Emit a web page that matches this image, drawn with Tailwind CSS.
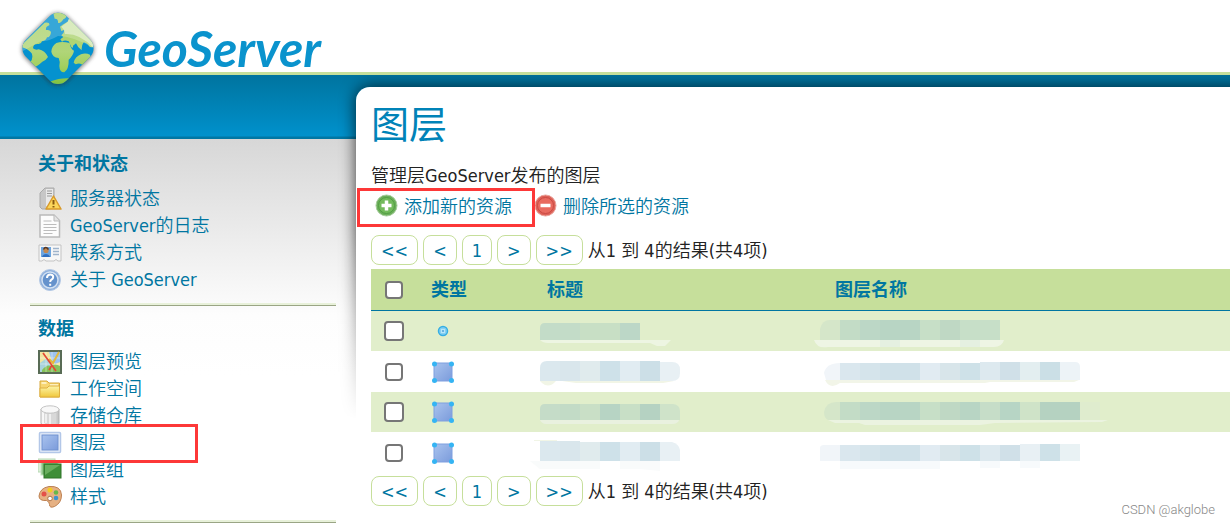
<!DOCTYPE html>
<html lang="zh">
<head>
<meta charset="utf-8">
<title>GeoServer: 图层</title>
<script src="https://cdn.jsdelivr.net/npm/@tailwindcss/browser@4"></script>
</head>
<body class="relative min-h-screen overflow-x-hidden bg-white font-['DejaVu_Sans_Condensed','Noto_Sans_CJK_SC',sans-serif] text-lg font-[350] leading-[27px] text-[#222]">
<svg class="absolute size-0" aria-hidden="true">
  <defs>
    <linearGradient id="sq" x1="0" y1="0" x2="1" y2="1"><stop offset="0" stop-color="#a9c3ee"/><stop offset="1" stop-color="#7b9bdb"/></linearGradient>
    <linearGradient id="gold" x1="0" y1="0" x2="0" y2="1"><stop offset="0" stop-color="#fdf5a8"/><stop offset="1" stop-color="#f0c83c"/></linearGradient>
    <linearGradient id="silver" x1="0" y1="0" x2="1" y2="0"><stop offset="0" stop-color="#f4f4f4"/><stop offset=".5" stop-color="#fff"/><stop offset="1" stop-color="#bdbdbd"/></linearGradient>
    <symbol id="poly" viewBox="0 0 24 24"><rect x="3" y="3" width="18" height="18" fill="url(#sq)" stroke="#7f9fe0"/><g fill="#35b4f3"><circle cx="3.500" cy="4" r="2.500"/><circle cx="20.500" cy="4" r="2.500"/><circle cx="3.500" cy="20.500" r="2.500"/><circle cx="20.500" cy="20.500" r="2.500"/></g></symbol>
  </defs>
</svg>

<header class="relative z-10 flex h-[75px] border-b-[3px] border-[#c6df9b] bg-white pl-[104px]">
  <svg class="absolute left-[18px] top-2 size-20 overflow-visible" viewBox="54 24 240 240" aria-hidden="true">
    <defs>
      <clipPath id="dia"><rect x="88" y="59" width="172" height="172" rx="36" transform="rotate(45 174 145)"/></clipPath>
      <linearGradient id="land" x1="0" y1="40" x2="0" y2="250" gradientUnits="userSpaceOnUse"><stop offset="0" stop-color="#a9d167"/><stop offset=".55" stop-color="#b0d578"/><stop offset=".75" stop-color="#a3d060"/><stop offset="1" stop-color="#83c341"/></linearGradient>
      <filter id="halo" x="-30%" y="-30%" width="160%" height="160%"><feGaussianBlur stdDeviation="6"/></filter>
    </defs>
    <rect x="86" y="59" width="176" height="176" rx="40" transform="rotate(45 174 147)" fill="#333" opacity=".65" filter="url(#halo)"/>
    <g clip-path="url(#dia)">
      <rect x="60" y="30" width="230" height="230" fill="#0592cf"/>
      <g fill="url(#land)">
        <path d="M60 140 L134 68 Q150 65 148 76 Q136 80 138 90 Q152 88 153 98 Q150 112 141 112 Q138 122 126 124 Q123 134 113 132 Q99 132 99 145 Q106 151 116 148 Q135 152 144 171 Q137 182 127 185 Q112 199 101 202 L90 188 Q101 174 95 160 Q85 145 60 140Z"/>
        <path d="M160 40 Q182 34 200 43 Q201 53 190 58 Q180 73 174 68 Q175 55 164 56Z"/>
        <path d="M180 80 L190 73 L203 65 Q205 57 212 50 L286 130 Q278 148 267 139 Q265 131 251 127 Q244 136 245 151 Q233 143 228 130 L219 137 Q220 147 214 141 L206 124 Q194 119 186 125 L181 118 L190 111 L184 106 Q194 99 192 90 L184 93Z"/>
        <path d="M169 129 Q186 123 209 129 Q212 148 222 152 Q220 166 206 179 Q207 207 193 217 Q179 218 178 198 Q181 184 176 174 Q157 173 154 155 Q155 138 169 129Z"/>
        <path d="M221 188 Q225 170 243 163 Q256 157 270 164 Q275 173 263 183 L249 197 Q241 186 227 193Z"/>
        <path d="M150 245 Q179 233 211 235 L190 260 H150Z"/>
      </g>
      <path d="M60 30 H290 V150 Q222 108 174 108 Q145 125 122 124 L60 158Z" fill="#fff" opacity=".2"/>
      <path d="M203 65 Q205 57 212 50 L286 130 L278 142 Q240 100 195 102 L192 90 L184 80Z" fill="#fff" opacity=".45"/>
    </g>
  </svg>
  <a href="#" class="font-[Lato,sans-serif] text-[50px] font-bold italic leading-[96px] text-[#0a93cd]">GeoServer</a>
</header>

<div class="relative grid grid-cols-[356px_minmax(0,1fr)] bg-[linear-gradient(#00749f,#0091cc_61px,#0077a4_62px,#0077a4_64px,#d7d7d7_64px,#fdfdfd_240px,#fff_300px)]">
  <nav class="pb-1 pl-[30px] pr-5 pt-[75px] text-[#0076a1]" aria-label="GeoServer">
    <section class="mb-[9px] border-b border-[#9aa585] pb-3 shadow-[inset_0_-2px_0_#e8f1da]">
      <h2 class="mb-2 pl-2 font-bold">关于和状态</h2>
      <ul class="pl-2">
        <li><a href="#" class="flex items-center gap-2"><svg class="size-6" viewBox="0 0 24 24"><path d="M2 6 7 1h9v18l-4 3H4l-2-2Z" fill="#c7c7c7" stroke="#aaa"/><path d="M8 2h7v17H8Z" fill="#e9e9e9"/><path d="M9 4h5M9 6.500h5M9 9h5" stroke="#999"/><path d="M15.500 9 23 22H8Z" fill="#fbd65a" stroke="#d99a2b" stroke-width="1.500" stroke-linejoin="round"/><path d="M15.500 13v4.500M15.500 19v1.500" stroke="#8a5a10" stroke-width="2"/></svg>服务器状态</a></li>
        <li><a href="#" class="flex items-center gap-2"><svg class="size-6" viewBox="0 0 24 24"><path d="M2 1h14l5.500 5.500V23H2Z" fill="#fcfcfc" stroke="#b9b9b9" stroke-width="1.500"/><path d="M16 1v6h5.500" fill="#e4e4e4" stroke="#b9b9b9"/><path d="M5.500 7h8M5.500 10.500h13M5.500 13.500h13M5.500 16.500h13M5.500 19.500h9" stroke="#bcbcbc"/></svg>GeoServer的日志</a></li>
        <li><a href="#" class="flex items-center gap-2"><svg class="size-6" viewBox="0 0 24 24"><path d="M1 4h22v16h-3l-2-1.500-2 1.500H8l-2-1.500L4 20H1Z" fill="#f7f7f7" stroke="#c3c3c3"/><rect x="3" y="6" width="10" height="10" fill="#6da5df"/><circle cx="8" cy="9.500" r="2.600" fill="#c4884f"/><path d="M5.500 8.500q2-4 5 0" stroke="#5b351c" stroke-width="1.500" fill="none"/><path d="M4 16q1-3 4-3t4 3" fill="#2f6fc0"/><path d="M15 7.500h6M15 10.500h6M15 13.500h6" stroke="#9fb4cc" stroke-width="1.500"/></svg>联系方式</a></li>
        <li><a href="#" class="flex items-center gap-2"><svg class="size-6" viewBox="0 0 24 24"><circle cx="12" cy="12" r="10.500" fill="#8fb0dc" stroke="#b4c9e5"/><circle cx="12" cy="12" r="8" fill="#6592cc" stroke="#d3e1f2" stroke-width="1.500"/><path d="M9 10q0-3.500 3.200-3.500 3 0 3 2.600 0 1.500-1.700 2.600-1.300.8-1.300 2.300M12.200 15.800v2" fill="none" stroke="#fff" stroke-width="2"/></svg>关于 GeoServer</a></li>
      </ul>
    </section>
    <section class="border-b border-[#9aa585] pb-3 shadow-[inset_0_-2px_0_#e8f1da]">
      <h2 class="mb-[6px] pl-2 font-bold">数据</h2>
      <ul class="pl-2">
        <li><a href="#" class="flex items-center gap-2"><svg class="size-6" viewBox="0 0 24 24"><rect x="1" y="1" width="22" height="22" fill="#f1e6a0" stroke="#586b55" stroke-width="2"/><path d="M11 2h11v10l-5 2-3-3Z" fill="#9dc3ef"/><path d="M2 13 9 8l4 8v6H2Z" fill="#a8d3dd"/><path d="M4 20q5-6 9-4 4-3 9 0v6H4Z" fill="#86c25b"/><path d="M8 2v20M14 2v20M2 8h20M2 14h20" stroke="#fff" stroke-opacity=".4"/><path d="m11 9 4 4 6-11" stroke="#e3b93c" stroke-width="2" fill="none"/><path d="m5 3 13 18M14 15l-3 5" stroke="#e24a35" stroke-width="1.700"/></svg>图层预览</a></li>
        <li><a href="#" class="flex items-center gap-2"><svg class="size-6" viewBox="0 0 24 24"><path d="M2 20V4h7l2 2h10.500v14Z" fill="#f7d672" stroke="#d8a93d"/><path d="M3.500 6h5M12 8h8" stroke="#fff8d8" stroke-width="1.500"/><path d="M2 20V11h7l2-2h10.500v11Z" fill="url(#gold)" stroke="#dfb040"/></svg>工作空间</a></li>
        <li><a href="#" class="flex items-center gap-2"><svg class="size-6" viewBox="0 0 24 24"><path d="M3 5v14q0 3 9 3t9-3V5Z" fill="url(#silver)" stroke="#b4b4b4"/><path d="M6 9v10q2 2 6 2t6-2V9" fill="#d8d8d8"/><path d="M8 10v9M12 10v10" stroke="#efefef" stroke-width="2"/><ellipse cx="12" cy="5.500" rx="9" ry="3.700" fill="#f8f8f8" stroke="#c4c4c4"/></svg>存储仓库</a></li>
        <li class="relative"><a href="#" class="flex items-center gap-2"><svg class="size-6" viewBox="0 0 24 24"><rect x="1.500" y="1.500" width="21" height="20" rx="1" fill="#e7eefa" stroke="#b3c7e8" stroke-width="1.500"/><rect x="4" y="4" width="16" height="15" fill="url(#sq)" stroke="#7192cf"/></svg>图层</a>
          <span class="pointer-events-none absolute -left-[18px] -top-[5px] h-[39px] w-[178px] border-[3px] border-[#fd3838]"></span></li>
        <li><a href="#" class="flex items-center gap-2"><svg class="size-6" viewBox="0 0 24 24"><rect x="0" y="1" width="17" height="13" fill="#dcefd9" stroke="#b7d9b4"/><rect x="3" y="3" width="17" height="14" fill="#8cc487" stroke="#c5e3c1"/><rect x="6" y="6" width="17" height="14" fill="#3f8e38" stroke="#2e7529"/><path d="M7 7h15L7 17Z" fill="#69ae5e"/></svg>图层组</a></li>
        <li><a href="#" class="flex items-center gap-2"><svg class="size-6" viewBox="0 0 24 24"><path d="M1 11Q2 3 11 1.500q12-1 12.500 8.500 0 8-7 11.500-5 2-5-2 0-3-3-4Q1 16 1 11Z" fill="#e6b183" stroke="#bd7f4f"/><circle cx="6" cy="9" r="2.500" fill="#e45148"/><circle cx="12" cy="5" r="2.500" fill="#f5cc22"/><circle cx="18" cy="7.500" r="2.300" fill="#67b84a"/><circle cx="18" cy="13" r="2.300" fill="#3e92cf"/><circle cx="12" cy="13.500" r="2.300" fill="#fff" stroke="#ad754b"/></svg>样式</a></li>
      </ul>
    </section>
  </nav>

  <main class="relative mt-3 pl-[15px] pt-[13px]">
    <div class="absolute -left-10 -top-3 right-0 h-[344px] overflow-hidden [mask-image:linear-gradient(#000_45%,transparent)]">
      <div class="absolute -right-10 left-10 top-3 h-[400px] rounded-tl-[14px] shadow-[0_0_16px_rgba(0,0,0,0.75)]"></div>
    </div>
    <div class="absolute inset-0 rounded-tl-[14px] bg-white"></div>
    <div class="relative">
      <h1 class="mb-3 text-[38px] font-normal leading-[50px] text-[#0083b8]">图层</h1>
      <p>管理层GeoServer发布的图层</p>
      <div class="flex h-[34px] items-center gap-[22px] pl-1 text-[#0076a1]">
        <a href="#" class="relative flex items-center gap-[5px]"><svg class="size-6" viewBox="0 0 24 24"><circle cx="11.500" cy="11.500" r="10.500" fill="#6cae5a" stroke="#a6cd9c"/><circle cx="11.500" cy="11.500" r="8" fill="#73ba5c" stroke="#519e43"/><path d="M11.500 6.500v10M6.500 11.500h10" stroke="#fff" stroke-width="3.500"/></svg>添加新的资源
          <span class="pointer-events-none absolute -left-[18px] -top-[5px] h-[39px] w-[178px] border-[3px] border-[#fd3838]"></span></a>
        <a href="#" class="flex items-center gap-[5px]"><svg class="size-6" viewBox="0 0 24 24"><circle cx="11.500" cy="11.500" r="10.500" fill="#dd6258" stroke="#eba49d"/><circle cx="11.500" cy="11.500" r="8" fill="#e96b60" stroke="#ca4a44"/><path d="M6.500 11.500h10" stroke="#fff" stroke-width="3.500"/></svg>删除所选的资源</a>
      </div>
      <div class="mb-1 mt-3 flex h-[30px] items-center gap-[5px]">
        <button class="h-[30px] rounded-lg border border-[#c6df9b] px-[9px] text-[#0076a1]">&lt;&lt;</button>
        <button class="h-[30px] rounded-lg border border-[#c6df9b] px-[9px] text-[#0076a1]">&lt;</button>
        <button class="h-[30px] rounded-lg border border-[#c6df9b] px-[9px] text-[#0076a1]">1</button>
        <button class="h-[30px] rounded-lg border border-[#c6df9b] px-[9px] text-[#0076a1]">&gt;</button>
        <button class="h-[30px] rounded-lg border border-[#c6df9b] px-[9px] text-[#0076a1]">&gt;&gt;</button>
        <span>从1 到 4的结果(共4项)</span>
      </div>
      <table class="w-full table-fixed border-separate border-spacing-0 text-left">
        <colgroup><col class="w-[50px]"><col class="w-[116px]"><col class="w-[288px]"><col></colgroup>
        <thead>
          <tr class="h-[42px] bg-[#c6df9b] text-[#0076a1]">
            <th class="border-b border-[#0076a1] p-0 pl-[14px]"><input type="checkbox" aria-label="全选" class="block size-[18px] appearance-none rounded-[4px] border-2 border-[#767676] bg-white"></th>
            <th class="border-b border-[#0076a1] p-0 pl-[10px]"><a href="#">类型</a></th>
            <th class="border-b border-[#0076a1] p-0 pl-[10px]"><a href="#">标题</a></th>
            <th class="border-b border-[#0076a1] p-0 pl-[10px]"><a href="#">图层名称</a></th>
          </tr>
        </thead>
        <tbody>
          <tr class="h-10 bg-[#e1eecb]">
            <td class="p-0 pl-[13px]"><input type="checkbox" aria-label="选择图层 1" class="block size-5 appearance-none rounded-[4px] border-2 border-[#767676] bg-white"></td>
            <td class="p-0 pl-[10px]"><svg class="block size-6" viewBox="0 0 24 24"><circle cx="12" cy="12" r="4.500" fill="#86d0f2" stroke="#35aee4" stroke-width="1.500"/><rect x="10.500" y="10.500" width="3" height="3" fill="#6ab3e0" stroke="#b7e6fa"/></svg></td>
            <td class="p-0 pl-[3px]"><svg class="block h-10 w-[140px] overflow-visible" viewBox="0 0 140 40"><path d="M0 17q0-5 5-5h35v17H0Z" fill="#c3dcc8"/><path d="M40 12h40v17H40Z" fill="#c8dfc5"/><path d="M80 12h20v17H80Z" fill="#bcd7c7"/><path d="M0 29h131l-6 6h-8l-7-3H8q-5 0-8-3Z" fill="#edf5e2"/></svg></td>
            <td class="p-0"><svg class="block h-10 w-[280px] overflow-visible" viewBox="5 0 280 40"><path d="M0 18q2-9 10-9h10v20H0Z" fill="#d5e6c9"/><path d="M20 9h20v20H20Z" fill="#c3dcc6"/><path d="M40 9h20v20H40Z" fill="#bcd7c6"/><path d="M60 9h40v20H60Z" fill="#b8d5c4"/><path d="M100 9h20v20h-20Z" fill="#c7dfc7"/><path d="M120 9h20v20h-20Z" fill="#bfd8c4"/><path d="M140 9h40v20h-40Z" fill="#c7dfc8"/><path d="M-6 29h190q-2 7-10 7H8Q-3 38-6 29Z" fill="#eef5e4"/><path d="M60 29h20v7H60ZM140 29h20v7h-20Z" fill="#e5f0e1"/></svg></td>
          </tr>
          <tr class="h-[41px]">
            <td class="p-0 pl-[14px]"><input type="checkbox" aria-label="选择图层 2" class="block size-[18px] appearance-none rounded-[4px] border-2 border-[#767676] bg-white"></td>
            <td class="p-0 pl-[10px]"><svg class="block size-6"><use href="#poly"/></svg></td>
            <td class="p-0 pl-[3px]"><svg class="block h-10 w-[140px] overflow-visible" viewBox="0 0 140 40"><path d="M0 16q0-7 7-7h13v20H0Z" fill="#dbe8ee"/><path d="M20 9h20v20H20Z" fill="#d9e6ec"/><path d="M40 9h20v20H40Z" fill="#e0ebed"/><path d="M60 9h20v20H60Z" fill="#cee1e9"/><path d="M80 9h20v20H80Z" fill="#e1ecf2"/><path d="M100 9h20v20h-20Z" fill="#ccdfe7"/><path d="M120 10h12q8 0 8 8v3q0 8-8 8h-12Z" fill="#e8f0f4"/><path d="M0 29h16q-7 8-14 2ZM22 29h112l-11 2H36Z" fill="#f1f5e6"/></svg></td>
            <td class="p-0"><svg class="block h-10 w-[280px] overflow-visible" viewBox="5 0 280 40"><path d="M4 21q2-10 16-10v17H6Z" fill="#f1f5f9"/><path d="M20 11h20v17H20Z" fill="#dae7ee"/><path d="M40 11h20v17H40Z" fill="#d5e4eb"/><path d="M60 11h40v17H60Z" fill="#d0e1e9"/><path d="M100 11h20v17h-20Z" fill="#e1ebf2"/><path d="M120 11h20v17h-20Z" fill="#d8e5ea"/><path d="M140 11h20v17h-20Z" fill="#cee1e8"/><path d="M160 10h20v18h-20Z" fill="#dde9ef"/><path d="M180 10h20v18h-20Z" fill="#d0e0e8"/><path d="M200 10h20v18h-20Z" fill="#e3eef0"/><path d="M220 10h20v18h-20Z" fill="#cbdfe6"/><path d="M240 10h15q5 0 5 5v13h-20Z" fill="#edf3f7"/><path d="M5 28h254l-5 2h-84l-5 1H20q-10 7-15-3Z" fill="#f2f5e8"/></svg></td>
          </tr>
          <tr class="h-10 bg-[#e1eecb]">
            <td class="p-0 pl-[13px]"><input type="checkbox" aria-label="选择图层 3" class="block size-5 appearance-none rounded-[4px] border-2 border-[#767676] bg-white"></td>
            <td class="p-0 pl-[10px]"><svg class="block size-6"><use href="#poly"/></svg></td>
            <td class="p-0 pl-[3px]"><svg class="block h-10 w-[140px] overflow-visible" viewBox="0 0 140 40"><path d="M0 17q0-5 5-5h15v16H0Z" fill="#c5dcc8"/><path d="M20 12h20v16H20Z" fill="#c2dbc6"/><path d="M40 12h20v16H40Z" fill="#c9dfc6"/><path d="M60 12h20v16H60Z" fill="#b7d4c4"/><path d="M80 12h20v16H80Z" fill="#c8dfc6"/><path d="M100 12h20v16h-20Z" fill="#b5d2c2"/><path d="M120 12h13q7 1 7 7v9h-20Z" fill="#cfe3c9"/><path d="M0 28h139q-1 4-7 4H6q-4 0-6-4Z" fill="#e9f1df"/></svg></td>
            <td class="p-0"><svg class="block h-10 w-[280px] overflow-visible" viewBox="5 0 280 40"><path d="M4 20q2-10 12-10h4v18H8Q4 26 4 20Z" fill="#d5e6c9"/><path d="M20 10h20v18H20Z" fill="#c3dcc6"/><path d="M40 10h20v18H40Z" fill="#bcd7c6"/><path d="M60 10h40v18H60Z" fill="#b8d5c4"/><path d="M100 10h20v18h-20Z" fill="#c7dfc7"/><path d="M120 10h20v18h-20Z" fill="#bfd8c4"/><path d="M140 10h20v18h-20Z" fill="#b8d5c4"/><path d="M160 10h20v18h-20Z" fill="#c6ddc8"/><path d="M180 10h20v18h-20Z" fill="#b7d5c5"/><path d="M200 10h20v18h-20Z" fill="#cfe3c8"/><path d="M220 10h40v18h-40Z" fill="#b5d2c1"/><path d="M260 10h20v18h-20Z" fill="#dfecce"/><path d="M8 28h280l-6 2-107 1-15 2H45l-6-2H15Z" fill="#ebf3e0"/></svg></td>
          </tr>
          <tr class="h-[41px]">
            <td class="p-0 pl-[14px]"><input type="checkbox" aria-label="选择图层 4" class="block size-[18px] appearance-none rounded-[4px] border-2 border-[#767676] bg-white"></td>
            <td class="p-0 pl-[10px]"><svg class="block size-6"><use href="#poly"/></svg></td>
            <td class="p-0 pl-[3px]"><svg class="block h-10 w-[140px] overflow-visible" viewBox="0 0 140 40"><path d="M-6 7h23v1H-6Z" fill="#f1f5e6"/><path d="M0 8h20v20H0Z" fill="#dbe8ee"/><path d="M20 8h20v20H20Z" fill="#d9e6ec"/><path d="M40 9h20v19H40Z" fill="#e0ebed"/><path d="M60 9h20v19H60Z" fill="#cee1e9"/><path d="M80 9h20v19H80Z" fill="#e1ecf2"/><path d="M100 9h20v19h-20Z" fill="#ccdfe7"/><path d="M120 9h12q7 2 8 8v11h-20Z" fill="#e8f0f4"/><path d="M-10 28h70v8H0ZM80 28h40v10l-20-2H80Z" fill="#f9fbfb"/></svg></td>
            <td class="p-0"><svg class="block h-10 w-[280px] overflow-visible" viewBox="5 0 280 40"><path d="M0 15q0-3 4-3h16v16H0Z" fill="#f1f5f9"/><path d="M20 12h20v16H20Z" fill="#dae7ee"/><path d="M40 12h20v16H40Z" fill="#d5e4eb"/><path d="M60 12h40v16H60Z" fill="#d0e1e9"/><path d="M100 12h20v16h-20Z" fill="#e1ebf2"/><path d="M120 12h20v16h-20Z" fill="#d8e5ea"/><path d="M140 12h20v16h-20Z" fill="#cee1e8"/><path d="M160 12h20v16h-20Z" fill="#dde9ef"/><path d="M180 12h20v16h-20Z" fill="#d0e0e8"/><path d="M200 11h20v17h-20Z" fill="#e8f0f4"/><path d="M220 11h20v17h-20Z" fill="#cee1e8"/><path d="M240 11h20v17h-20Z" fill="#e9f2f4"/><path d="M20 28h100v8H20ZM160 28h20v7h-20ZM200 28h20v7h-20Z" fill="#f7fafc"/></svg></td>
          </tr>
        </tbody>
      </table>
      <div class="mt-[3px] flex h-[30px] items-center gap-[5px]">
        <button class="h-[30px] rounded-lg border border-[#c6df9b] px-[9px] text-[#0076a1]">&lt;&lt;</button>
        <button class="h-[30px] rounded-lg border border-[#c6df9b] px-[9px] text-[#0076a1]">&lt;</button>
        <button class="h-[30px] rounded-lg border border-[#c6df9b] px-[9px] text-[#0076a1]">1</button>
        <button class="h-[30px] rounded-lg border border-[#c6df9b] px-[9px] text-[#0076a1]">&gt;</button>
        <button class="h-[30px] rounded-lg border border-[#c6df9b] px-[9px] text-[#0076a1]">&gt;&gt;</button>
        <span>从1 到 4的结果(共4项)</span>
      </div>
    </div>
  </main>
</div>
<span class="absolute bottom-[7px] right-[15px] font-[Roboto,sans-serif] text-[13px] leading-5 text-[#888]">CSDN @akglobe</span>
</body>
</html>
